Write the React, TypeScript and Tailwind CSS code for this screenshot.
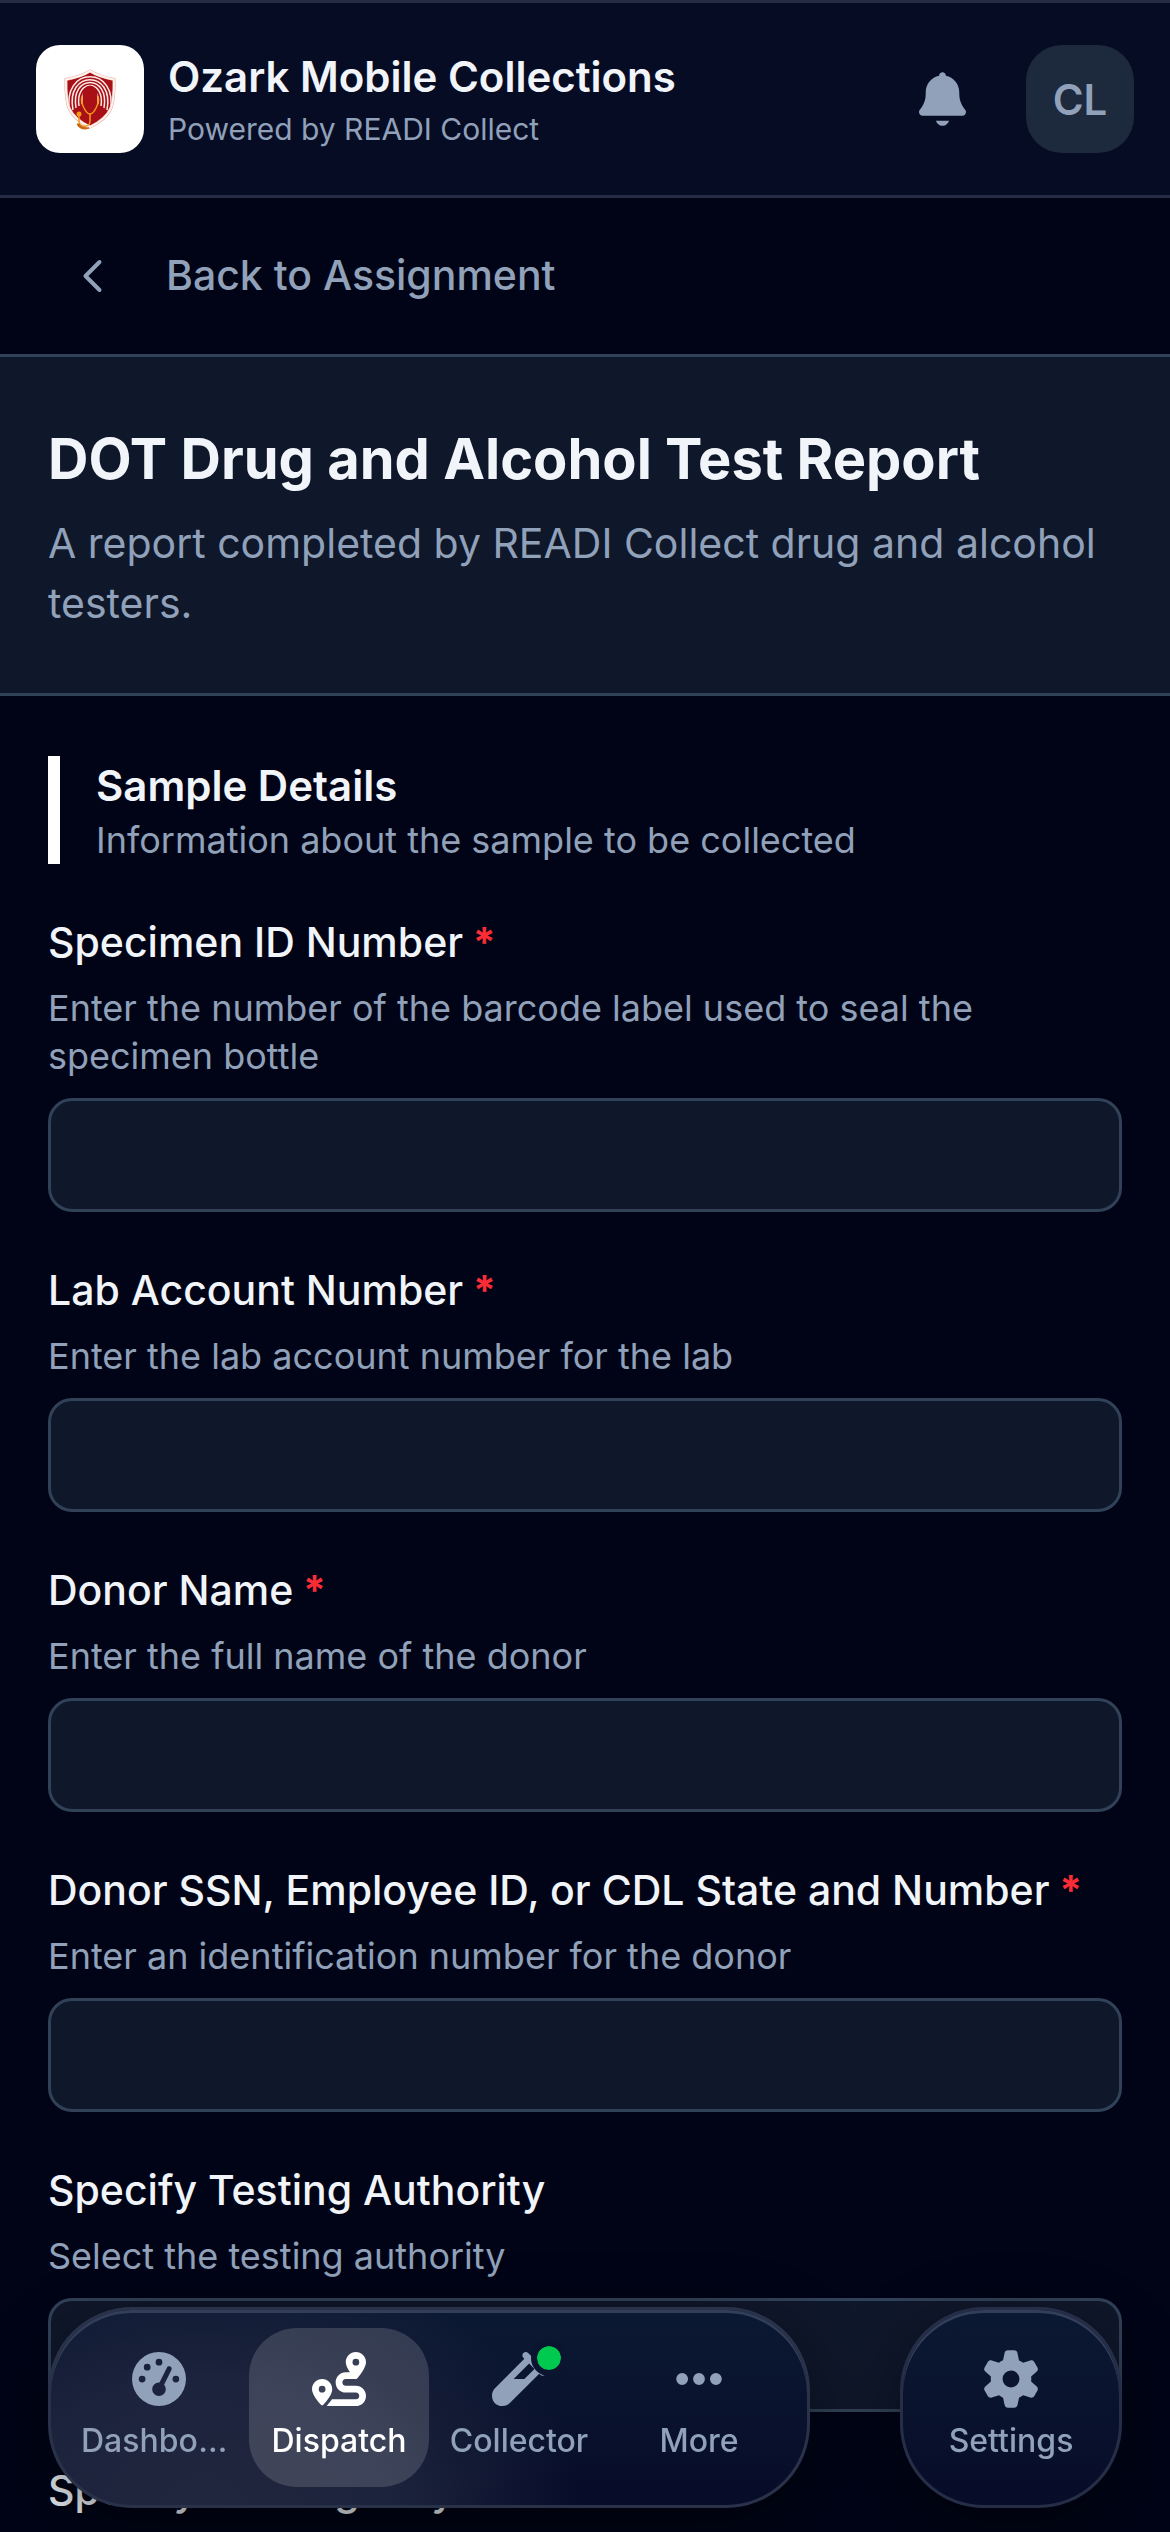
import { ReactNode, useId } from "react";
import { FaEllipsis, FaRoute, FaVial } from "react-icons/fa6";

function BellIcon() {
  return (
    <svg viewBox="0 0 448 512" className="h-[54px] w-[47px]" fill="currentColor" aria-hidden="true">
      <path d="M224 0c-17.7 0-32 14.3-32 32l0 3.2C119 50 64 114.6 64 192l0 21.7c0 48.1-16.4 94.8-46.4 132.4L7.8 358.3C2.7 364.6 0 372.4 0 380.5 0 400.1 15.9 416 35.5 416l376.9 0c19.6 0 35.5-15.9 35.5-35.5 0-8.1-2.7-15.9-7.8-22.2l-9.8-12.2C400.4 308.5 384 261.8 384 213.7l0-21.7c0-77.4-55-142-128-156.8l0-3.2c0-17.7-14.3-32-32-32zM162 464c7.1 27.6 32.2 48 62 48s54.9-20.4 62-48l-124 0z" />
    </svg>
  );
}

function GearIcon() {
  return (
    <svg viewBox="0 0 512 512" className="size-[54px] overflow-visible" fill="currentColor" aria-hidden="true">
      <path d="M195.1 9.5C198.1-5.3 211.2-16 226.4-16l59.8 0c15.2 0 28.3 10.7 31.3 25.5L332 79.5c14.1 6 27.3 13.7 39.3 22.8l67.8-22.5c14.4-4.8 30.2 1.2 37.8 14.4l29.9 51.8c7.6 13.2 4.9 29.8-6.5 39.9L447 233.3c.9 7.4 1.3 15 1.3 22.7s-.5 15.3-1.3 22.7l53.4 47.5c11.4 10.1 14 26.8 6.5 39.9l-29.9 51.8c-7.6 13.1-23.4 19.2-37.8 14.4l-67.8-22.5c-12.1 9.1-25.3 16.7-39.3 22.8l-14.4 69.9c-3.1 14.9-16.2 25.5-31.3 25.5l-59.8 0c-15.2 0-28.3-10.7-31.3-25.5l-14.4-69.9c-14.1-6-27.2-13.7-39.3-22.8L73.5 432.3c-14.4 4.8-30.2-1.2-37.8-14.4L5.8 366.1c-7.6-13.2-4.9-29.8 6.5-39.9l53.4-47.5c-.9-7.4-1.3-15-1.3-22.7s.5-15.3 1.3-22.7L12.3 185.8c-11.4-10.1-14-26.8-6.5-39.9L35.7 94.1c7.6-13.2 23.4-19.2 37.8-14.4l67.8 22.5c12.1-9.1 25.3-16.7 39.3-22.8L195.1 9.5zM256.3 336a80 80 0 1 0 -.6-160 80 80 0 1 0 .6 160z" />
    </svg>
  );
}

function GaugeIcon() {
  return (
    <svg viewBox="0 0 512 512" className="size-[54px]" fill="currentColor" aria-hidden="true">
      <path d="M0 256a256 256 0 1 1 512 0 256 256 0 1 1 -512 0zM288 96a32 32 0 1 0 -64 0 32 32 0 1 0 64 0zM256 416c35.3 0 64-28.7 64-64 0-16.2-6-31.1-16-42.3l69.5-138.9c5.900-11.900 1.100-26.300-10.700-32.200s-26.300-1.100-32.200 10.700L261.100 288.200c-1.700-.1-3.400-.2-5.100-.2-35.300 0-64 28.700-64 64s28.700 64 64 64zM176 144a32 32 0 1 0 -64 0 32 32 0 1 0 64 0zM96 288a32 32 0 1 0 0-64 32 32 0 1 0 0 64zM448 256a32 32 0 1 0 -64 0 32 32 0 1 0 64 0z" />
    </svg>
  );
}

function ChevronIcon() {
  return (
    <svg
      viewBox="0 0 24 24"
      className="size-12"
      fill="none"
      stroke="currentColor"
      strokeWidth="2"
      strokeLinecap="round"
      strokeLinejoin="round"
      aria-hidden="true"
    >
      <path d="M15.750 19 8.750 12l7-7" />
    </svg>
  );
}

/* Shield emblem: fingerprint arcs behind a figure wearing a stethoscope. */
function ShieldLogo() {
  const clip = useId();
  const shield = "M27 3C35 8 43 10 51 11.500C51.500 36 50 48 27 59C4 48 2.500 36 3 11.500C11 10 19 8 27 3Z";
  return (
    <svg viewBox="0 0 54 62" className="h-[62px] w-[54px]" fill="none" role="img" aria-label="Ozark Mobile Collections">
      <clipPath id={clip}>
        <path d={shield} />
      </clipPath>
      <path d={shield} fill="#a90f16" />
      <g clipPath={`url(#${clip})`}>
        <g stroke="#fbeae6" strokeWidth="1.5">
          <path d="M19 36C17 16 37 16 35 36" />
          <path d="M16 38C12 10.500 42 10.500 38 38" />
          <path d="M13 40C7 6 47 6 41 40" />
          <path d="M10 42C2 1.500 52 1.500 44 42" />
          <path d="M7 44C-3 -3 57 -3 47 44" />
        </g>
        <path d="M6 50C9 42 17 39 22 37L32 37C37 39 45 42 48 50L27 62Z" fill="#a90f16" />
        <ellipse cx="27" cy="27" rx="7.500" ry="9.500" fill="#a90f16" />
        <path d="M22 32H32V42H22Z" fill="#a90f16" />
      </g>
      <path d={shield} stroke="#e3a096" strokeWidth="3" />
      <path d={shield} stroke="#fdf1ec" strokeWidth="2.200" />
      <g stroke="#f39a1b" strokeWidth="1.500" strokeLinecap="round">
        <path d="M19 29C17 34 20 37 21 40C23 44 25 46 27 46C29 46 31 44 33 40C34 37 37 34 35 29" />
        <path d="M27 46V53C27 60 16 60 16 53V48" />
      </g>
      <circle cx="16" cy="46" r="2.500" fill="#f39a1b" />
      <path d="M14 56C16 61 22 62 26 60C22 60 18 59 16 56Z" fill="#c8640f" stroke="#c8640f" />
    </svg>
  );
}

type FieldProps = { label: string; hint: string; required?: boolean; select?: boolean };

function Field({ label, hint, required, select }: FieldProps) {
  const id = useId();
  const box =
    "mt-[18px] block h-[114px] w-full appearance-none rounded-[24px] border-[3px] border-[#314158] bg-[#0f172a] px-9 text-[41px] text-[#f1f5f9] outline-none";
  return (
    <div>
      <label htmlFor={id} className="block text-[41px] leading-[60px] font-medium text-[#f1f5f9]">
        {label}
        {required && <span className="font-bold text-[#fb2c36]"> *</span>}
      </label>
      <p id={`${id}-hint`} className="mt-3 text-[36px] leading-[48px] text-[#90a1b9]">
        {hint}
      </p>
      {select ? (
        <select id={id} aria-describedby={`${id}-hint`} className={box}>
          <option value=""></option>
        </select>
      ) : (
        <input id={id} type="text" aria-describedby={`${id}-hint`} required={required} className={box} />
      )}
    </div>
  );
}

const fields: FieldProps[] = [
  {
    label: "Specimen ID Number",
    hint: "Enter the number of the barcode label used to seal the specimen bottle",
    required: true,
  },
  { label: "Lab Account Number", hint: "Enter the lab account number for the lab", required: true },
  { label: "Donor Name", hint: "Enter the full name of the donor", required: true },
  {
    label: "Donor SSN, Employee ID, or CDL State and Number",
    hint: "Enter an identification number for the donor",
    required: true,
  },
  { label: "Specify Testing Authority", hint: "Select the testing authority", select: true },
];

function NavItem({ icon, label, active, dot }: { icon: ReactNode; label: string; active?: boolean; dot?: boolean }) {
  return (
    <a
      href="#"
      aria-current={active ? "page" : undefined}
      className={
        active
          ? "flex h-[159px] w-[180px] flex-col items-center rounded-[48px] bg-white/15 px-3 pt-6 text-white"
          : "flex h-[159px] w-[180px] flex-col items-center rounded-[48px] px-3 pt-6 text-[#90a1b9]"
      }
    >
      <span className="relative flex size-[54px] items-center justify-center text-[54px]">
        {icon}
        {dot && (
          <span className="absolute -top-3 -right-[21px] size-9 rounded-full border-[6px] border-[#0b1530] bg-[#00c950] bg-clip-padding" />
        )}
      </span>
      <span className="mt-3 block max-w-full truncate text-[32px] leading-[45px] font-medium">{label}</span>
    </a>
  );
}

const mainPill =
  "flex rounded-[84px] border-[3px] border-[#2a324a] bg-[#0a1230] bg-[radial-gradient(ellipse_50%_130%_at_20%_100%,#20263e_0%,#1c233c_50%,transparent_100%),linear-gradient(to_bottom,#0c1933,#070c28)] p-[18px] shadow-[inset_0_3px_0_#333f59,0_24px_72px_rgba(0,0,0,0.45)]";

const sidePill =
  "flex rounded-[84px] border-[3px] border-[#262e47] bg-linear-to-b from-[#0c1933] to-[#070c28] p-[18px] shadow-[inset_0_3px_0_#333f59,0_24px_72px_rgba(0,0,0,0.45)]";

export default function App() {
  return (
    <div className="min-h-screen bg-[#000416] font-['Inter',sans-serif] text-[#f1f5f9]">
      <header className="flex items-center border-y-[3px] border-[#262c43] bg-[#070c25] px-9 py-[42px]">
        <div className="flex size-[108px] items-center justify-center rounded-[24px] bg-white">
          <ShieldLogo />
        </div>
        <div className="ml-6 flex-1">
          <p className="text-[42px] leading-[60px] font-semibold">Ozark Mobile Collections</p>
          <p className="text-[30px] leading-[45px] text-[#90a1b9]">Powered by READI Collect</p>
        </div>
        <button
          type="button"
          aria-label="Notifications"
          className="mr-[30px] flex size-[108px] items-center justify-center text-[#90a1b9]"
        >
          <BellIcon />
        </button>
        <button
          type="button"
          aria-label="Account"
          className="flex size-[108px] items-center justify-center rounded-[36px] bg-[#1d293d] text-[42px] font-semibold text-[#90a1b9]"
        >
          CL
        </button>
      </header>

      <a
        href="#"
        className="flex h-[156px] items-center gap-[50px] pl-[68px] text-[41px] font-medium text-[#90a1b9]"
      >
        <ChevronIcon />
        Back to Assignment
      </a>

      <section className="border-y-[3px] border-[#314158] bg-[#0f172a] px-12 py-[60px]">
        <h1 className="text-[56px] leading-[84px] font-bold">DOT Drug and Alcohol Test Report</h1>
        <p className="mt-3 text-[41px] leading-[60px] text-[#90a1b9]">
          A report completed by READI Collect drug and alcohol testers.
        </p>
      </section>

      <main className="flex flex-col gap-12 px-12 pt-[60px]">
        <div className="border-l-[12px] border-white pl-9">
          <h2 className="text-[42px] leading-[60px] font-semibold">Sample Details</h2>
          <p className="text-[36px] leading-[48px] text-[#90a1b9]">Information about the sample to be collected</p>
        </div>
        {fields.map((field) => (
          <Field key={field.label} {...field} />
        ))}
        <h3 className="text-[41px] leading-[60px] font-medium">Specify DOT Agency</h3>
      </main>

      <nav className="fixed inset-x-0 bottom-6 flex justify-between px-12" aria-label="Main">
        <div className={mainPill}>
          <NavItem icon={<GaugeIcon />} label="Dashboard" />
          <NavItem icon={<FaRoute />} label="Dispatch" active />
          <NavItem icon={<FaVial />} label="Collector" dot />
          <NavItem icon={<FaEllipsis />} label="More" />
        </div>
        <div className={sidePill}>
          <NavItem icon={<GearIcon />} label="Settings" />
        </div>
      </nav>
    </div>
  );
}
